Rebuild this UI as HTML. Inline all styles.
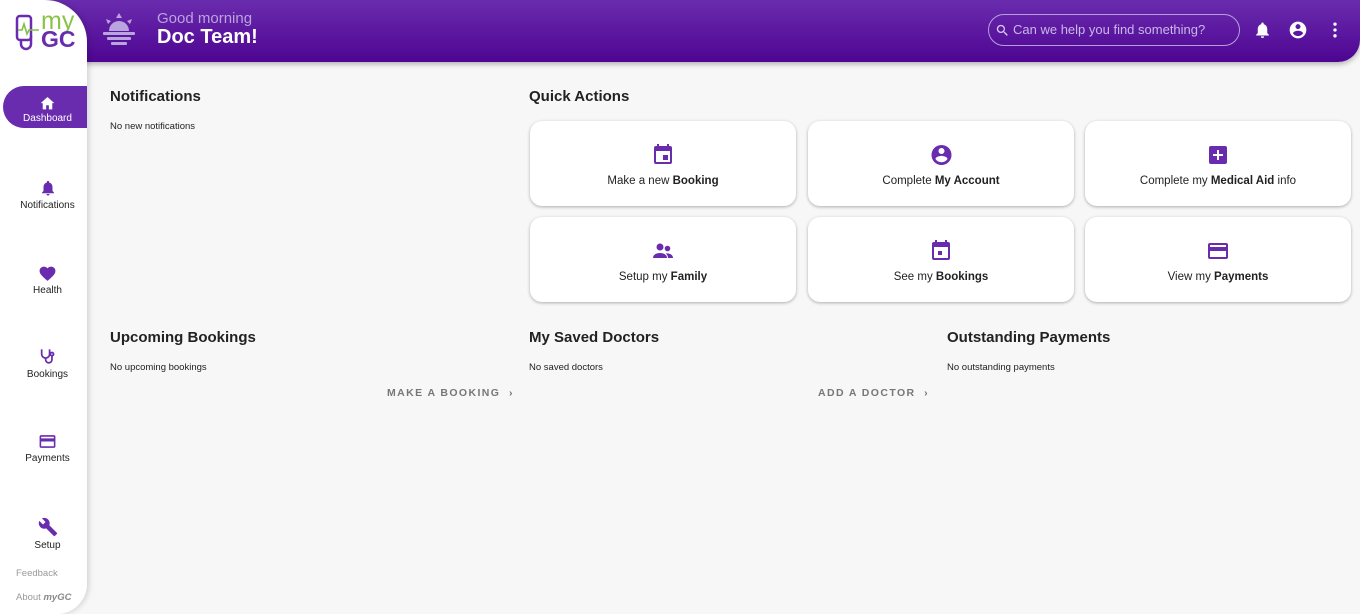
<!DOCTYPE html>
<html><head><meta charset="utf-8"><style>
*{box-sizing:border-box;margin:0;padding:0}
body{width:1360px;height:614px;overflow:hidden;background:#f7f7f7;font-family:"Liberation Sans",sans-serif;color:#222;position:relative}
.hdr{position:absolute;left:0;top:0;width:1360px;height:62px;background:linear-gradient(#6a2cae,#4e0592);border-bottom-right-radius:22px;box-shadow:0 2px 6px rgba(0,0,0,.3)}
.side{position:absolute;left:0;top:0;width:87px;height:614px;background:#fff;border-top-right-radius:42px;border-bottom-right-radius:30px;box-shadow:2px 0 6px rgba(0,0,0,.15);z-index:2}
.nav{position:absolute;left:4px;width:87px;text-align:center;font-size:10px;color:#222}
.nav svg{display:block;margin:0 auto 3px}
.active{left:3px;width:84px;height:42px;top:86px;background:#6a2cae;color:#fff;border-radius:21px 0 0 21px;padding-top:9px;padding-left:5px}
h2{position:absolute;font-size:15px;font-weight:bold;color:#222}
.sm{position:absolute;font-size:9.5px;color:#222}
.card{position:absolute;width:266px;height:85px;background:#fff;border-radius:12px;box-shadow:0 1px 3px rgba(0,0,0,.3);text-align:center;font-size:11.5px;padding-top:22px}
.card svg{display:block;margin:0 auto 8px;height:24px}
.lnk{position:absolute;font-size:10.5px;letter-spacing:1.4px;color:#777;font-weight:bold}
</style></head><body>
<div class="hdr">
<svg style="position:absolute;left:101px;top:13px" width="36" height="34" viewBox="0 0 36 34" fill="#b9a4de"><path d="M18 0l3 5h-6zM5 6l5 2-3 3zM31 6l-5 2 3 3z"/><path d="M8 18a10 10 0 0 1 20 0z"/><rect x="2" y="19" width="32" height="3" rx="1"/><rect x="6" y="24" width="24" height="3" rx="1"/><rect x="10" y="29" width="16" height="3" rx="1"/></svg>
<div style="position:absolute;left:157px;top:10px;font-size:15px;color:#b9a4de">Good morning</div>
<div style="position:absolute;left:157px;top:26px;font-size:20px;color:#fff;font-weight:bold">Doc Team!</div>
<div style="position:absolute;left:988px;top:14px;width:252px;height:32px;border:1px solid #b79fdb;border-radius:16px;color:#c9b8e6;font-size:13px;padding:7px 0 0 24px">Can we help you find something?
<svg style="position:absolute;left:6px;top:8px" width="15" height="15" viewBox="0 0 24 24" fill="#d8cdee"><path d="M15.5 14h-.8l-.3-.3A6.5 6.5 0 1 0 9.5 16a6.5 6.5 0 0 0 4.2-1.6l.3.3v.8l5 5 1.5-1.5zm-6 0a4.5 4.5 0 1 1 0-9 4.5 4.5 0 0 1 0 9z"/></svg></div>
<svg style="position:absolute;left:1253px;top:20px" width="19" height="20" viewBox="0 0 24 24" fill="#fff"><path d="M12 22a2 2 0 0 0 2-2h-4a2 2 0 0 0 2 2zm6-6v-5c0-3-1.6-5.6-4.5-6.3V4a1.5 1.5 0 0 0-3 0v.7C7.6 5.4 6 8 6 11v5l-2 2v1h16v-1z"/></svg>
<svg style="position:absolute;left:1288px;top:20px" width="20" height="20" viewBox="0 0 24 24" fill="#fff"><path d="M12 2a10 10 0 1 0 0 20 10 10 0 0 0 0-20zm0 3a3 3 0 1 1 0 6 3 3 0 0 1 0-6zm0 14.2a7.2 7.2 0 0 1-6-3.2c0-2 4-3.1 6-3.1s6 1.1 6 3.1a7.2 7.2 0 0 1-6 3.2z"/></svg>
<svg style="position:absolute;left:1325px;top:20px" width="20" height="20" viewBox="0 0 24 24" fill="#fff"><circle cx="12" cy="5" r="2"/><circle cx="12" cy="12" r="2"/><circle cx="12" cy="19" r="2"/></svg>
</div>
<div class="side">
<svg style="position:absolute;left:15px;top:14px" width="28" height="38" viewBox="0 0 28 38" fill="none" stroke="#6a2cae" stroke-width="2.5"><rect x="2" y="2" width="14" height="24" rx="3"/><path d="M3 16h4l2-6 3 10 2-4h10" stroke="#7dc242" stroke-width="1.6"/><path d="M16 22v8a5 5 0 0 1-10 0v-4"/></svg>
<div style="position:absolute;left:41px;top:9px;font-size:25px;color:#8bc34a;line-height:1">my</div>
<div style="position:absolute;left:41px;top:28px;font-size:23px;color:#6a2cae;font-weight:bold;line-height:1">GC</div>
<div class="nav active"><svg width="17" height="15" viewBox="0 0 24 22" fill="#fff"><path d="M10 21v-6h4v6h5v-9h3L12 3 2 12h3v9z"/></svg>Dashboard</div>
<div class="nav" style="top:179px"><svg width="18" height="18" viewBox="0 0 24 24" fill="#6a2cae"><path d="M12 22a2 2 0 0 0 2-2h-4a2 2 0 0 0 2 2zm6-6v-5c0-3-1.6-5.6-4.5-6.3V4a1.5 1.5 0 0 0-3 0v.7C7.6 5.4 6 8 6 11v5l-2 2v1h16v-1z"/></svg>Notifications</div>
<div class="nav" style="top:264px"><svg width="19" height="18" viewBox="0 0 24 22" fill="#6a2cae"><path d="M12 21l-1.5-1.3C5.4 15 2 12 2 8.4 2 5.4 4.4 3 7.5 3c1.7 0 3.4.8 4.5 2.1C13.1 3.8 14.8 3 16.5 3 19.6 3 22 5.4 22 8.4c0 3.7-3.4 6.7-8.5 11.3z"/></svg>Health</div>
<div class="nav" style="top:347px"><svg width="20" height="19" viewBox="0 0 24 24" fill="none" stroke="#6a2cae" stroke-width="2.2"><path d="M4 3v6a5 5 0 0 0 10 0V3M9 14v2a4 4 0 0 0 8 0v-4"/><circle cx="17" cy="9" r="2"/></svg>Bookings</div>
<div class="nav" style="top:433px"><svg width="19" height="17" viewBox="0 0 24 20" fill="#6a2cae"><path d="M20 2H4a2 2 0 0 0-2 2v12a2 2 0 0 0 2 2h16a2 2 0 0 0 2-2V4a2 2 0 0 0-2-2zm0 14H4v-6h16zm0-10H4V4h16z"/></svg>Payments</div>
<div class="nav" style="top:517px"><svg width="20" height="20" viewBox="0 0 24 24" fill="#6a2cae"><path d="M22.7 19l-9.1-9.1c.9-2.3.4-5-1.5-6.9-2-2-5-2.4-7.4-1.3L9 6 6 9 1.6 4.7C.4 7.1.9 10.1 2.9 12.1c1.9 1.9 4.6 2.4 6.9 1.5l9.1 9.1c.4.4 1 .4 1.4 0l2.3-2.3c.5-.4.5-1.1.1-1.4z"/></svg>Setup</div>
<div style="position:absolute;left:16px;top:568px;font-size:9.5px;color:#999">Feedback</div>
<div style="position:absolute;left:16px;top:592px;font-size:9.5px;color:#999">About <b><i style="color:#888">myGC</i></b></div>
</div>
<h2 style="left:110px;top:88px">Notifications</h2>
<div class="sm" style="left:110px;top:121px">No new notifications</div>
<h2 style="left:529px;top:88px">Quick Actions</h2>
<div class="card" style="left:530px;top:121px"><svg width="24" height="24" viewBox="0 0 24 24" fill="#6a2cae"><path d="M17 12h-5v5h5zM16 1v2H8V1H6v2H5a2 2 0 0 0-2 2v14a2 2 0 0 0 2 2h14a2 2 0 0 0 2-2V5a2 2 0 0 0-2-2h-1V1zm3 18H5V8h14z"/></svg>Make a new <b>Booking</b></div>
<div class="card" style="left:808px;top:121px"><svg width="25" height="24" viewBox="0 0 24 24" fill="#6a2cae"><path d="M12 2a10 10 0 1 0 0 20 10 10 0 0 0 0-20zm0 3a3 3 0 1 1 0 6 3 3 0 0 1 0-6zm0 14.2a7.2 7.2 0 0 1-6-3.2c0-2 4-3.1 6-3.1s6 1.1 6 3.1a7.2 7.2 0 0 1-6 3.2z"/></svg>Complete <b>My Account</b></div>
<div class="card" style="left:1085px;top:121px"><svg width="26" height="24" viewBox="0 0 24 24" fill="#6a2cae"><path d="M19 3H5a2 2 0 0 0-2 2v14a2 2 0 0 0 2 2h14a2 2 0 0 0 2-2V5a2 2 0 0 0-2-2zm-2 10h-4v4h-2v-4H7v-2h4V7h2v4h4z"/></svg>Complete my <b>Medical Aid</b> info</div>
<div class="card" style="left:530px;top:217px"><svg width="28" height="24" viewBox="0 0 24 24" fill="#6a2cae"><circle cx="9" cy="8" r="3.5"/><circle cx="16.5" cy="9.5" r="2.8"/><path d="M2 19c0-3 3-5 7-5s7 2 7 5zM17 19c0-2-1-3.5-2.3-4.5 3.5-.4 7.3 1 7.3 4.5z"/></svg>Setup my <b>Family</b></div>
<div class="card" style="left:808px;top:217px"><svg width="24" height="24" viewBox="0 0 24 24" fill="#6a2cae"><path d="M13 12h-4v4h4zM16 1v2H8V1H6v2H5a2 2 0 0 0-2 2v14a2 2 0 0 0 2 2h14a2 2 0 0 0 2-2V5a2 2 0 0 0-2-2h-1V1zm3 18H5V8h14z"/></svg>See my <b>Bookings</b></div>
<div class="card" style="left:1085px;top:217px"><svg width="28" height="24" viewBox="0 0 24 24" fill="#6a2cae"><path d="M20 4H4a2 2 0 0 0-2 2v12a2 2 0 0 0 2 2h16a2 2 0 0 0 2-2V6a2 2 0 0 0-2-2zm0 14H4v-6h16zm0-10H4V6h16z"/></svg>View my <b>Payments</b></div>
<h2 style="left:110px;top:329px">Upcoming Bookings</h2>
<div class="sm" style="left:110px;top:362px">No upcoming bookings</div>
<div class="lnk" style="left:387px;top:387px">MAKE A BOOKING &nbsp;›</div>
<h2 style="left:529px;top:329px">My Saved Doctors</h2>
<div class="sm" style="left:529px;top:362px">No saved doctors</div>
<div class="lnk" style="left:818px;top:387px">ADD A DOCTOR &nbsp;›</div>
<h2 style="left:947px;top:329px">Outstanding Payments</h2>
<div class="sm" style="left:947px;top:362px">No outstanding payments</div>
</body></html>
